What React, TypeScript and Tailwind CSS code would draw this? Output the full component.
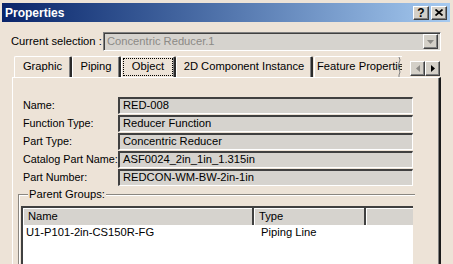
import React from 'react';

const fields: [string, string][] = [
  ['Name:', 'RED-008'],
  ['Function Type:', 'Reducer Function'],
  ['Part Type:', 'Concentric Reducer'],
  ['Catalog Part Name:', 'ASF0024_2in_1in_1.315in'],
  ['Part Number:', 'REDCON-WM-BW-2in-1in'],
];

const tabs = [
  { label: 'Graphic', w: 'w-[58px]' },
  { label: 'Piping', w: 'w-[49px]' },
  { label: 'Object', w: 'w-[55px]', focus: true },
  { label: '2D Component Instance', w: 'w-[137px]' },
];

const raised =
  'border border-t-white border-l-white border-r-[#404040] border-b-[#404040] shadow-[inset_-1px_-1px_0_#808080] bg-[#d4d0c8]';

const App: React.FC = () => {
  return (
    <div className="w-[453px] h-[264px] overflow-hidden bg-[#ede3d7] font-['Liberation_Sans',Arial,sans-serif] text-[11.2px] text-black leading-none">
      {/* title bar */}
      <div className="pt-[3px] pl-[2px] pr-[3px]">
        <div className="h-[19px] flex items-center justify-between bg-gradient-to-r from-[#0a246a] to-[#a6caf0] pl-[3px] pr-[3px]">
          <span className="text-white font-bold text-[12px]">Properties</span>
          <div className="flex gap-[2px]">
            <div className={`w-[16px] h-[14px] flex items-center justify-center font-bold text-[12px] ${raised}`}>?</div>
            <div className={`w-[16px] h-[14px] flex items-center justify-center ${raised}`}>
              <svg width="8" height="7" viewBox="0 0 8 7">
                <path d="M0.5 0.5 L7.5 6.5 M7.5 0.5 L0.5 6.5" stroke="black" strokeWidth="1.7" />
              </svg>
            </div>
          </div>
        </div>
      </div>

      {/* current selection */}
      <div className="mt-[10px] flex items-center pl-[11px] pr-[12px]">
        <span className="w-[92px] whitespace-nowrap">Current selection :</span>
        <div className="flex-1 h-[19px] flex items-center bg-[#d6d3ce] border border-t-[#808080] border-l-[#808080] border-r-white border-b-white shadow-[inset_1px_1px_0_#404040] pl-[3px] pr-[2px]">
          <span className="flex-1 text-[#8c8a86]">Concentric Reducer.1</span>
          <div className={`w-[15px] h-[15px] flex items-center justify-center ${raised}`}>
            <svg width="7" height="4" viewBox="0 0 7 4">
              <path d="M0 0 H7 L3.5 4 Z" fill="#8c8a86" />
            </svg>
          </div>
        </div>
      </div>

      {/* tabs */}
      <div className="mt-[4px] h-[22px] flex items-end pl-[14px]">
        {tabs.map((t) => (
          <div
            key={t.label}
            className={`${t.w} h-[21px] flex items-center justify-center border-t border-l border-t-white border-l-white border-r-2 border-r-[#2a2a2a] rounded-tl-[2px] rounded-tr-[2px] shadow-[inset_-1px_0_0_#808080] px-[1px] py-[1px]`}
          >
            {t.focus ? (
              <div className="w-full h-full flex items-center justify-center border border-dotted border-black">{t.label}</div>
            ) : (
              <span className="whitespace-nowrap">{t.label}</span>
            )}
          </div>
        ))}
        <div className="relative w-[88px] h-[21px] ml-[1px] flex items-center border-t border-l border-t-white border-l-white rounded-tl-[2px] overflow-hidden pl-[2px]">
          <span className="whitespace-nowrap">Feature Propertie</span>
          <svg className="absolute right-0 top-0" width="4" height="21" viewBox="0 0 4 21">
            <path d="M1 0 Q3 3 1 6 Q-1 9 1 12 Q3 15 1 18 L1 21" stroke="#808080" fill="none" />
          </svg>
        </div>
        <div className="ml-[8px] mb-[1px] flex">
          <div className={`w-[15px] h-[15px] flex items-center justify-center ${raised}`}>
            <svg width="4" height="7" viewBox="0 0 4 7">
              <path d="M4 0 V7 L0 3.5 Z" fill="#8c8a86" />
            </svg>
          </div>
          <div className={`w-[15px] h-[15px] flex items-center justify-center ${raised}`}>
            <svg width="4" height="7" viewBox="0 0 4 7">
              <path d="M0 0 V7 L4 3.5 Z" fill="black" />
            </svg>
          </div>
        </div>
      </div>

      {/* panel */}
      <div className="ml-[12px] w-[429px] h-[200px] border-t border-l border-white border-r-2 border-r-[#1a1a1a] shadow-[inset_-1px_0_0_#808080] pt-[19px] pl-[10px]">
        <div className="flex flex-col gap-[1px]">
          {fields.map(([label, value]) => (
            <div key={label} className="flex items-start h-[17px]">
              <span className="w-[95px] pt-[3px] whitespace-nowrap text-[10.8px]">{label}</span>
              <div className="w-[295px] h-[17px] flex items-center bg-[#d6d3ce] border-t-2 border-l-2 border-t-[#404040] border-l-[#404040] border-b border-r border-b-white border-r-white pl-[3px]">
                {value}
              </div>
            </div>
          ))}
        </div>

        {/* parent groups */}
        <div className="relative ml-[-5px] mt-[8px] w-[397px] h-[80px] border-t border-l border-[#8a8680] shadow-[inset_1px_1px_0_#ffffff] pt-[11px] pl-[2px]">
          <span className="absolute left-[9px] top-[-6px] bg-[#ede3d7] px-[1px]">Parent Groups:</span>
          <div className="w-[392px] h-[70px] bg-white border-t-2 border-l-2 border-t-[#404040] border-l-[#404040]">
            <div className="flex h-[17px] bg-[#d6d3ce]">
              <div className="w-[231px] flex items-center pl-[5px] border-r-2 border-r-[#404040] shadow-[inset_1px_1px_0_#ffffff]">Name</div>
              <div className="w-[112px] flex items-center pl-[5px] border-r-2 border-r-[#404040] shadow-[inset_1px_1px_0_#ffffff]">Type</div>
              <div className="flex-1 shadow-[inset_1px_1px_0_#ffffff]"></div>
            </div>
            <div className="flex h-[16px] items-center">
              <span className="w-[233px] pl-[3px]">U1-P101-2in-CS150R-FG</span>
              <span className="pl-[5px]">Piping Line</span>
            </div>
          </div>
        </div>
      </div>
    </div>
  );
};

export default App;
